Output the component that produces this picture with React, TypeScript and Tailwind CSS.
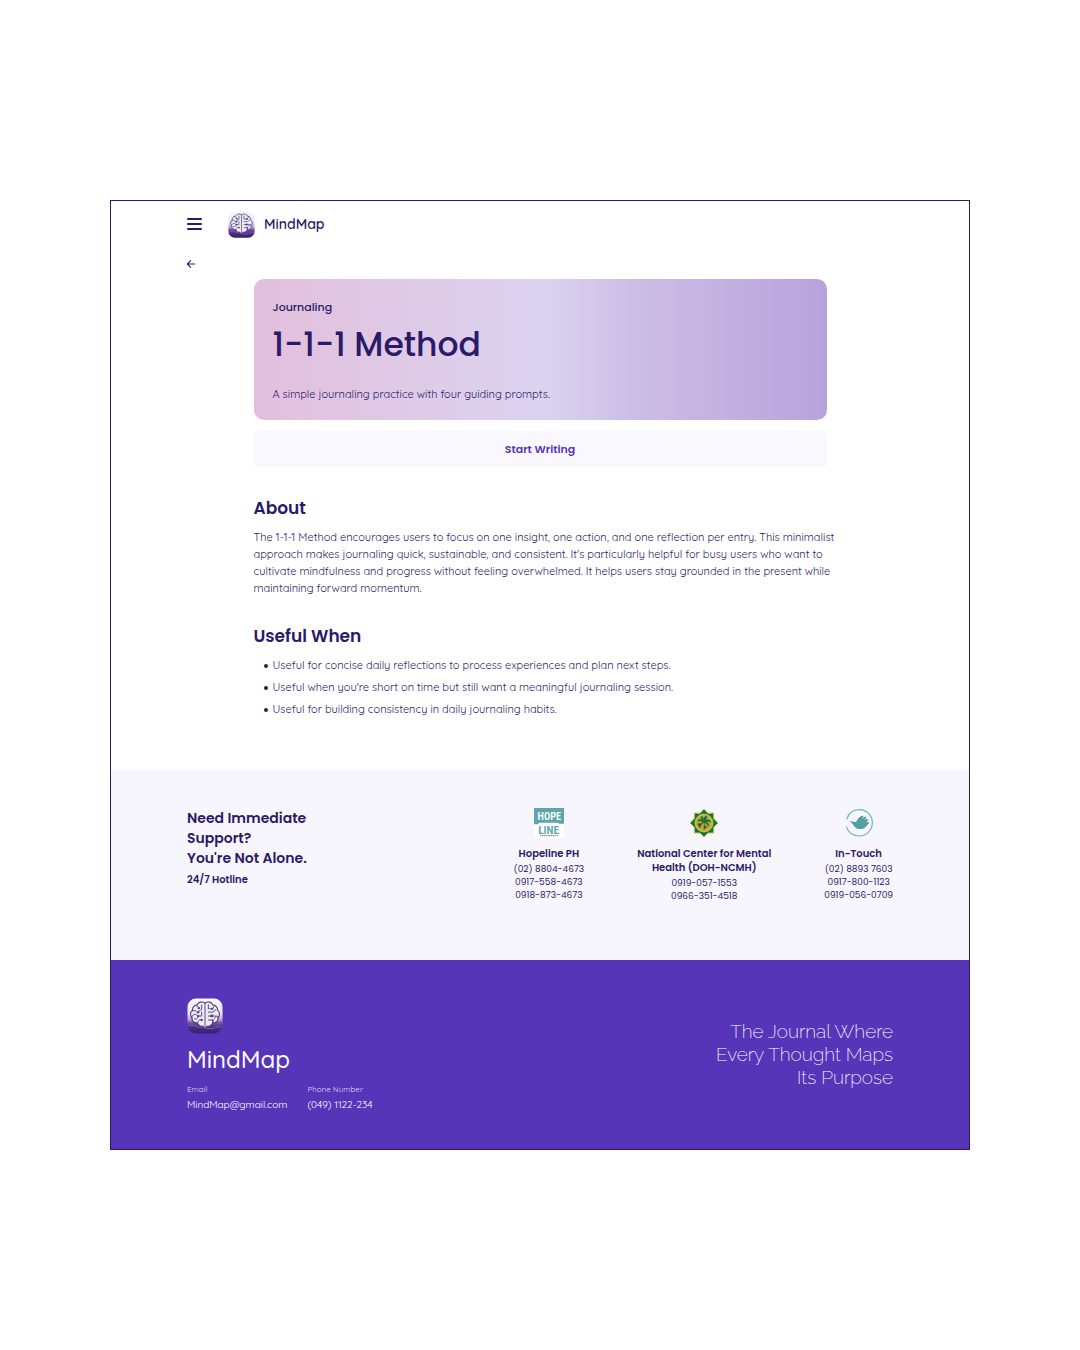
import { useId } from "react";

const display = "font-['Poppins','Inter',sans-serif]";
const body = "font-['Quicksand','Inter',sans-serif]";

function BrainLogo({ className }: { className: string }) {
  const id = useId();
  return (
    <svg viewBox="0 0 72 72" className={className} aria-hidden="true">
      <defs>
        <linearGradient id={id} x1="0" y1="0" x2="0" y2="1">
          <stop offset="0" stopColor="#faf8fd" />
          <stop offset="0.45" stopColor="#eae2f3" />
          <stop offset="0.62" stopColor="#b795d2" />
          <stop offset="0.68" stopColor="#8058ae" />
          <stop offset="0.82" stopColor="#4c3087" />
          <stop offset="1" stopColor="#332070" />
        </linearGradient>
      </defs>
      <rect x="1" y="1" width="70" height="70" rx="17" fill={`url(#${id})`} />
      <path d="M3 55h14l3 3h15l4 3h14l4-3h12" fill="none" stroke="#7b58a8" strokeWidth="2" />
      <g transform="translate(36 35) scale(1.12) translate(-36 -35)">
        <path
          d="M36 13c-5-4-12-2-14 3-5 0-9 5-8 9-5 4-5 10-1 14-1 6 4 10 9 9 2 5 7 7 10 6l4 5 4-5c3 1 8-1 10-6 5 1 10-3 9-9 4-4 4-10-1-14 1-4-3-9-8-9-2-5-9-7-14-3z"
          fill="#eee8f7"
          stroke="#4a4176"
          strokeWidth="2"
        />
        <g fill="none" stroke="#4a4176" strokeWidth="1.6" strokeLinecap="round">
          <path d="M36 13v45M30 16v8l-6 4M21 17l4 5M13 27c5-2 9 0 10 4M12 39c1-6 7-8 10-4s-1 8-5 6M30 29v7h-6M31 43c-5-2-8 1-8 5M42 16v7h7M53 18l-4 5M42 29h8l5-4M42 36h14M61 38c-3-3-7-2-8 2M42 43h8v6" />
        </g>
        <g fill="#4a4176">
          <circle cx="25" cy="22" r="2" />
          <circle cx="24" cy="29" r="2" />
          <circle cx="24" cy="36" r="2" />
          <circle cx="49" cy="23" r="2" />
          <circle cx="48" cy="36" r="2.6" />
          <circle cx="50" cy="44" r="2" />
          <circle cx="30" cy="43" r="2" />
        </g>
      </g>
    </svg>
  );
}

function HopelineLogo() {
  return (
    <svg viewBox="0 0 90 90" className="size-[30px]" aria-label="Hopeline" role="img">
      <rect width="90" height="90" fill="#fff" />
      <path d="M0 0h90v47H74v-3H14v5H0z" fill="#5ca5ac" />
      <g textAnchor="middle" fontWeight="600" className="font-['Roboto_Condensed','Roboto',sans-serif]">
        <text x="46" y="37" fontSize="31" fill="#fff">HOPE</text>
        <text x="44" y="77" fontSize="34" fill="#5ca5ac">LINE</text>
      </g>
      <path d="M18 83h54" stroke="#a48f83" strokeWidth="4" strokeDasharray="4 1.5" />
    </svg>
  );
}

function HealthCenterLogo() {
  return (
    <svg viewBox="0 0 90 90" className="size-[30px]" aria-hidden="true">
      <path
        d="M45 3l12 13 17-1v16l13 14-13 13v17H57L45 87 33 75H16V58L3 45l13-14V15l17 1z"
        fill="#17713f"
        stroke="#c9c740"
        strokeWidth="3"
      />
      <circle cx="45" cy="45" r="27" fill="#c7b53c" stroke="#e0d257" strokeWidth="2" />
      <circle cx="45" cy="45" r="21" fill="#a9ae3a" />
      <path
        d="M45 67c1-9 2-15 0-25M45 42c-8-10-15-9-20-3 8-2 13 0 20 3zm0 0c-3-11 1-17 9-18-3 6-3 12-9 18zm0 0c6-9 15-8 20-1-8-1-13 0-20 1zm0 0c9-1 15 5 13 13-3-7-6-10-13-13zm0 0c-9 2-15 8-13 15 3-7 7-11 13-15zM44 41c-8-6-10-12-5-17 1 6 4 10 5 17z"
        fill="#1c6b3a"
        stroke="#1c6b3a"
        strokeWidth="2"
      />
      <path d="M26 48l7 2-2 8M45 60l7-5" fill="none" stroke="#6e2c25" strokeWidth="5" />
    </svg>
  );
}

function InTouchLogo() {
  return (
    <svg viewBox="0 0 90 90" className="size-[30px]" aria-hidden="true">
      <path d="M8 34C14 15 29 5 46 5c22 0 39 17 39 39S68 84 46 84C27 84 12 73 7 56" fill="none" stroke="#68b9ad" strokeWidth="3.5" />
      <path
        d="M16 41c8-2 13 1 18 1 4-2 5-6 8-10 4-5 9-9 14-9 4 1 2 4 0 7l-2 3 9-7c4-1 5 2 3 5l-5 6 8-4c4-1 5 3 2 5l-5 5 6-1c4 0 4 4 1 6-5 3-6 11-16 14-11 3-20 1-25-6-4-6-8-13-16-15z"
        fill="#519f9f"
      />
    </svg>
  );
}

const hotlines = [
  { name: ["Hopeline PH"], numbers: ["(02) 8804-4673", "0917-558-4673", "0918-873-4673"], logo: <HopelineLogo /> },
  { name: ["National Center for Mental", "Health (DOH-NCMH)"], numbers: ["0919-057-1553", "0966-351-4518"], logo: <HealthCenterLogo /> },
  { name: ["In-Touch"], numbers: ["(02) 8893 7603", "0917-800-1123", "0919-056-0709"], logo: <InTouchLogo /> },
];

export default function App() {
  return (
    <div className="min-h-screen bg-white px-[110px] py-[200px] text-[#2a1a67]">
      <div className={`border border-[#2a1a67] ${body}`}>
        <header className="px-[76px] pt-[7px]">
          <div className="flex h-8 items-center">
            <button type="button" aria-label="Open menu" className="flex w-[15px] flex-col gap-[3px]">
              <span className="h-[2px] w-full rounded-full bg-[#2a1a67]" />
              <span className="h-[2px] w-full rounded-full bg-[#2a1a67]" />
              <span className="h-[2px] w-full rounded-full bg-[#2a1a67]" />
            </button>
            <a href="#home" className="ml-[26px] flex items-center gap-[9px]">
              <BrainLogo className="size-[27px]" />
              <span className="text-[14px] font-semibold">MindMap</span>
            </a>
          </div>
          <button type="button" aria-label="Go back" className="mt-5 block">
            <svg viewBox="0 0 24 24" className="h-2 w-2 overflow-visible" fill="none" stroke="currentColor" strokeWidth="3.2" strokeLinecap="round" strokeLinejoin="round">
              <path d="M23 12H1M11 2L1 12l10 10" />
            </svg>
          </button>
        </header>

        <main className="mx-auto max-w-[573px] pt-[11px] pb-[52px]">
          <section className="rounded-[10px] bg-[linear-gradient(90deg,#e2bfdc_0%,#dcd3f0_50%,#cdbfe6_65%,#b9a2dc_100%)] px-[19px] pt-5 pb-[18px]">
            <p className={`text-[11px] leading-4 font-medium ${display}`}>Journaling</p>
            <h1 className={`mt-[5px] text-[33px] leading-[50px] font-medium ${display}`}>1-1-1 Method</h1>
            <p className="mt-4 text-[11px] leading-4">A simple journaling practice with four guiding prompts.</p>
          </section>
          <button type="button" className={`mt-[11px] h-9 w-full rounded bg-[#f9f8fe] text-[11px] font-semibold text-[#5635b9] ${display}`}>
            Start Writing
          </button>

          <section className="mt-[27px]">
            <h2 className={`text-[17px] leading-7 font-semibold ${display}`}>About</h2>
            <p className="mt-[7px] text-[11px] leading-[17px] whitespace-nowrap">
              The 1-1-1 Method encourages users to focus on one insight, one action, and one reflection per entry. This minimalist
              <br />
              approach makes journaling quick, sustainable, and consistent. It's particularly helpful for busy users who want to
              <br />
              cultivate mindfulness and progress without feeling overwhelmed. It helps users stay grounded in the present while
              <br />
              maintaining forward momentum.
            </p>
          </section>

          <section className="mt-[25px]">
            <h2 className={`text-[17px] leading-7 font-semibold ${display}`}>Useful When</h2>
            <ul className="mt-[7px] flex flex-col gap-[5px] text-[11px] leading-[17px]">
              {[
                "Useful for concise daily reflections to process experiences and plan next steps.",
                "Useful when you're short on time but still want a meaningful journaling session.",
                "Useful for building consistency in daily journaling habits.",
              ].map((item) => (
                <li key={item} className="flex items-center gap-[5px] pl-[10px]">
                  <span className="size-1 rounded-full bg-[#2a1a67]" />
                  {item}
                </li>
              ))}
            </ul>
          </section>
        </main>

        <section className={`flex min-h-[190px] justify-between bg-[#f7f5fe] px-[76px] pt-[38px] ${display}`}>
          <div>
            <h2 className="text-[14px] leading-5 font-semibold">
              Need Immediate
              <br />
              Support?
              <br />
              You're Not Alone.
            </h2>
            <p className="mt-[5px] text-[10px] leading-[14px] font-semibold">24/7 Hotline</p>
          </div>
          <div className="flex gap-[53px] text-center">
            {hotlines.map((line) => (
              <div key={line.name[0]} className="flex flex-col items-center">
                {line.logo}
                <h3 className="mt-[9px] text-[10px] leading-[14px] font-semibold">
                  {line.name.map((part) => (
                    <span key={part} className="block">{part}</span>
                  ))}
                </h3>
                <p className="mt-[2px] text-[9px] leading-[13px]">
                  {line.numbers.map((number) => (
                    <a key={number} href={`tel:${number.replace(/\D/g, "")}`} className="block">{number}</a>
                  ))}
                </p>
              </div>
            ))}
          </div>
        </section>

        <footer className="flex min-h-[189px] items-center justify-between bg-[#5635b9] px-[76px] text-white">
          <div>
            <BrainLogo className="size-9" />
            <p className="mt-[9px] text-[24px] leading-8 font-medium">MindMap</p>
            <dl className="mt-[7px] flex gap-5">
              <div>
                <dt className="text-[8px] leading-[14px] text-[#ddd5f2]">Email</dt>
                <dd className="mt-[2px] text-[10px] leading-[14px]">MindMap@gmail.com</dd>
              </div>
              <div>
                <dt className="text-[8px] leading-[14px] text-[#ddd5f2]">Phone Number</dt>
                <dd className="mt-[2px] text-[10px] leading-[14px]">(049) 1122-234</dd>
              </div>
            </dl>
          </div>
          <p className="text-right font-['Raleway','Lato',sans-serif] text-[19px] leading-[23px] font-extralight">
            The Journal Where
            <br />
            Every Thought Maps
            <br />
            Its Purpose
          </p>
        </footer>
      </div>
    </div>
  );
}
